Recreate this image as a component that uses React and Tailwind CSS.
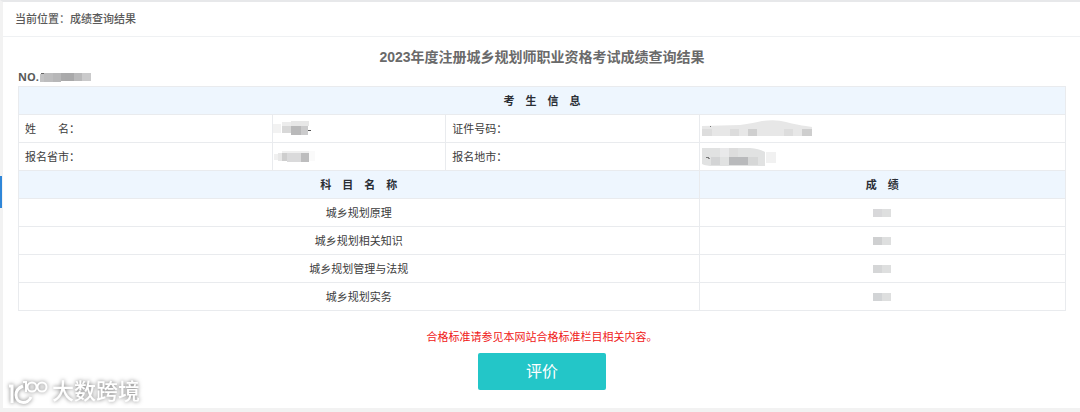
const subjects = [
  { name: '城乡规划原理', tone: 'fill-[#d8d8da]' },
  { name: '城乡规划相关知识', tone: 'fill-[#cfd0d1]' },
  { name: '城乡规划管理与法规', tone: 'fill-[#d5d6d7]' },
  { name: '城乡规划实务', tone: 'fill-[#d2d4d6]' },
];

function Blocks({ w, h, label, blocks }) {
  return (
    <svg width={w} height={h} viewBox={`0 0 ${w} ${h}`} role="img" aria-label={label} shapeRendering="crispEdges" className="block">
      {blocks.map(([x, y, bw, bh, fill], i) => (
        <rect key={i} x={x} y={y} width={bw} height={bh} fill={fill} />
      ))}
    </svg>
  );
}

function NumberMask() {
  return (
    <Blocks
      w={52}
      h={9}
      label="已隐藏"
      blocks={[
        [1, 1, 4, 8, '#c3c3c4'], [5, 0, 9, 9, '#bdbdbe'], [14, 0, 8, 9, '#b7b7b8'],
        [22, 0, 4, 8, '#aaaaab'], [26, 0, 9, 8, '#a9a9aa'], [35, 0, 8, 8, '#b9b9ba'],
        [43, 0, 9, 8, '#cacacb'], [2, 0, 3, 1, '#666666'],
      ]}
    />
  );
}

function NameMask() {
  return (
    <Blocks
      w={38}
      h={15}
      label="已隐藏"
      blocks={[
        [0, 3, 8, 9, '#f2f2f2'], [9, 1, 9, 4, '#ececec'], [18, 0, 18, 5, '#e7e7e7'],
        [9, 5, 9, 7, '#d8d8d8'], [18, 5, 10, 9, '#b9b9ba'], [28, 5, 7, 9, '#cbcbcc'],
        [35, 9, 3, 1, '#555555'],
      ]}
    />
  );
}

function ProvinceMask() {
  return (
    <Blocks
      w={42}
      h={13}
      label="已隐藏"
      blocks={[
        [1, 4, 8, 6, '#f0f0f0'], [9, 1, 27, 2, '#efefef'], [36, 1, 6, 10, '#fafafa'],
        [5, 3, 4, 8, '#e8e8e8'], [9, 3, 5, 8, '#cecece'], [14, 3, 14, 9, '#dadadb'],
        [28, 3, 8, 9, '#bdbdbe'],
      ]}
    />
  );
}

function IdMask() {
  return (
    <svg width="110" height="17" viewBox="0 0 110 17" role="img" aria-label="已隐藏" className="block">
      <path d="M0 6 L38 5 Q52 3 60 1 Q74 -1 84 2 Q96 5 104 6 L110 7 V16 H0Z" fill="#e7e7e7" />
      <g shapeRendering="crispEdges">
        <rect x="0" y="9" width="10" height="7" fill="#dddddd" />
        <rect x="28" y="9" width="9" height="7" fill="#dcdcdc" />
        <rect x="46" y="9" width="9" height="7" fill="#cfcfcf" />
        <rect x="82" y="9" width="9" height="7" fill="#dddddd" />
        <rect x="100" y="9" width="10" height="7" fill="#cecece" />
        <rect x="8" y="6" width="1" height="1" fill="#777777" />
      </g>
    </svg>
  );
}

function CityMask() {
  return (
    <svg width="74" height="18" viewBox="0 0 74 18" role="img" aria-label="已隐藏" className="block">
      <path d="M0 0 H48 Q58 1 63 4 V18 H12 Q4 18 0 16Z" fill="#e1e2e2" />
      <g shapeRendering="crispEdges">
        <rect x="18" y="0" width="9" height="9" fill="#e9e9ea" />
        <rect x="27" y="0" width="9" height="9" fill="#dddddd" />
        <rect x="9" y="9" width="9" height="8" fill="#d3d4d5" />
        <rect x="27" y="9" width="19" height="8" fill="#b9babc" />
        <rect x="46" y="9" width="10" height="8" fill="#d6d7d7" />
        <rect x="64" y="4" width="10" height="11" fill="#f1f1f1" />
        <rect x="4" y="9" width="3" height="1" fill="#777777" />
        <rect x="6" y="10" width="2" height="1" fill="#888888" />
      </g>
    </svg>
  );
}

function ScoreMask({ tone }) {
  return (
    <svg width="18" height="8" viewBox="0 0 18 8" role="img" aria-label="已隐藏" className="mx-auto block" shapeRendering="crispEdges">
      <rect width="9" height="8" className={tone} />
      <rect x="9" width="9" height="8" className="fill-[#dedfdf]" />
    </svg>
  );
}

function Watermark() {
  return (
    <div className="absolute bottom-0.5 left-[5px] flex items-center gap-1 text-white drop-shadow-[0_0_2px_#777]">
      <svg width="40" height="28" viewBox="0 0 40 28" fill="none" stroke="currentColor" aria-hidden="true">
        <path d="M1 8 H4 V25" strokeWidth="3" />
        <path d="M15 8 C10 10 8 13 8 17 C8 26 20 27 23 19" strokeWidth="3" />
        <path d="M15 4 H18 V14" strokeWidth="2" />
        <circle cx="24" cy="9" r="4.5" strokeWidth="2" />
        <circle cx="34" cy="9" r="4.5" strokeWidth="2" />
      </svg>
      <span className="text-[22px] leading-7 font-medium">大数跨境</span>
    </div>
  );
}

const cell = 'h-7 border border-[#e9ebee] p-0';
const head = 'h-7 border border-[#e9ebee] bg-[#eef6fe] p-0 font-bold text-[#2a2e35]';

export default function App() {
  return (
    <div className="relative border-t-2 border-b-4 border-l-3 border-t-[#e7e8ea] border-b-[#f2f2f2] border-l-[#f2f2f2] bg-white pb-[18px] font-['Liberation_Sans','Noto_Sans_CJK_SC',sans-serif] text-[11px] leading-4 text-[#3c3c3c]">
      <div className="absolute top-[174px] -left-[3px] h-8 w-0.5 bg-[#2f86d8]" />
      <nav aria-label="当前位置" className="flex h-[35px] items-center border-b border-[#eff1f3] px-3 font-medium text-[#5a5a5a]">
        当前位置：成绩查询结果
      </nav>
      <main className="pr-3.5 pl-[15px]">
        <h1 className="pt-2.5 text-center text-[14px] leading-5 font-bold text-[#6a6a6a]">
          2023年度注册城乡规划师职业资格考试成绩查询结果
        </h1>
        <div className="mt-0.5 flex h-4 items-center font-['Open_Sans',sans-serif] font-bold text-[#5a5a5a]">
          NO.
          <NumberMask />
        </div>
        <table className="mt-px w-full table-fixed border-collapse">
          <colgroup>
            <col className="w-[24.3%]" />
            <col className="w-[16.5%]" />
            <col className="w-[24.2%]" />
            <col className="w-[35%]" />
          </colgroup>
          <tbody>
            <tr>
              <th colSpan={4} className={head}>考　生　信　息</th>
            </tr>
            <tr>
              <td className={`${cell} pl-1.5`}>姓　　名：</td>
              <td className={cell}><NameMask /></td>
              <td className={`${cell} pl-1.5`}>证件号码：</td>
              <td className={`${cell} pl-0.5`}><IdMask /></td>
            </tr>
            <tr>
              <td className={`${cell} pl-1.5`}>报名省市：</td>
              <td className={cell}><ProvinceMask /></td>
              <td className={`${cell} pl-1.5`}>报名地市：</td>
              <td className={`${cell} pl-0.5`}><CityMask /></td>
            </tr>
            <tr>
              <th colSpan={3} className={head}>科　目　名　称</th>
              <th className={head}>成　绩</th>
            </tr>
            {subjects.map((s) => (
              <tr key={s.name}>
                <td colSpan={3} className={`${cell} text-center`}>{s.name}</td>
                <td className={cell}><ScoreMask tone={s.tone} /></td>
              </tr>
            ))}
          </tbody>
        </table>
        <p className="mt-[18px] text-center text-[#f01818]">合格标准请参见本网站合格标准栏目相关内容。</p>
        <button type="button" className="mx-auto mt-2 block h-[37px] w-32 rounded-xs bg-[#23c6c8] text-base text-white">
          评价
        </button>
      </main>
      <Watermark />
    </div>
  );
}
